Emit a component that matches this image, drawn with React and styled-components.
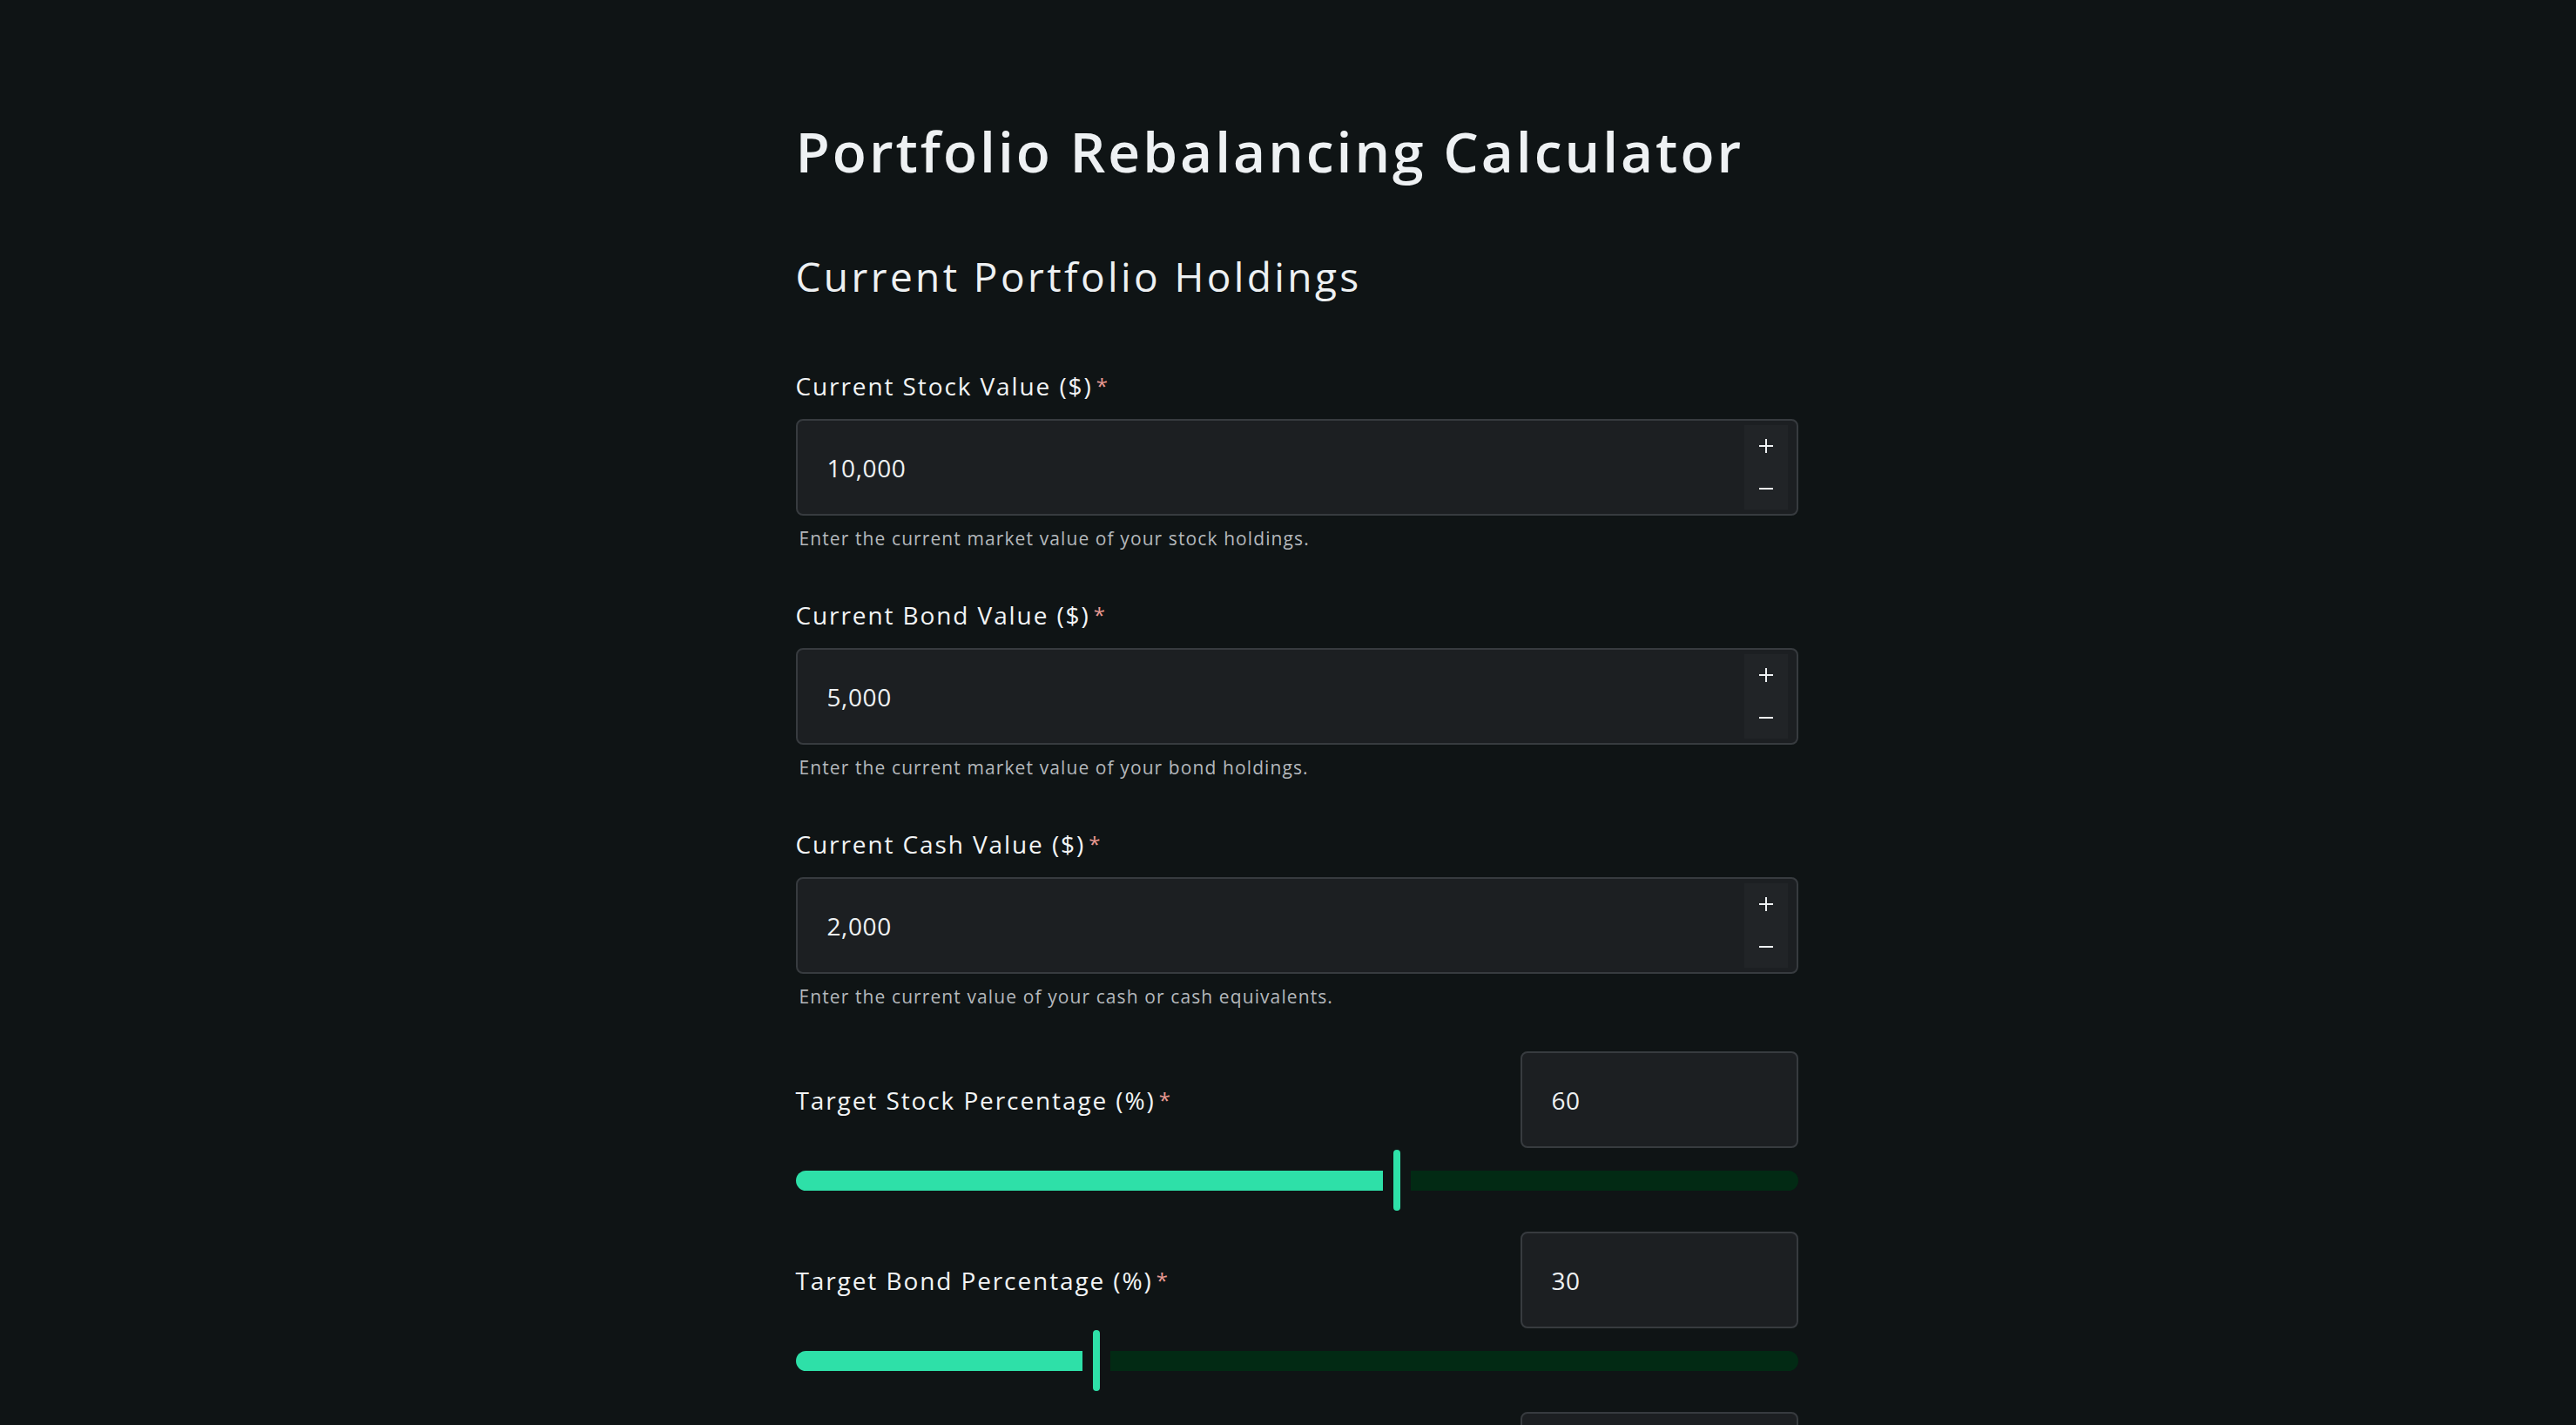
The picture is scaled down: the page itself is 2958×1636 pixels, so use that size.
import styled, { createGlobalStyle } from "styled-components";

const GlobalStyle = createGlobalStyle`
  html, body {
    margin: 0;
    padding: 0;
    background: #0f1415;
  }
  body {
    font-family: "Open Sans", "Liberation Sans", sans-serif;
    color: #eef1f3;
  }
`;

const Page = styled.div`
  display: flex;
  justify-content: center;
  padding: 0 0 0 20px;
  min-height: 100vh;
`;

const Main = styled.main`
  width: 1151px;
  display: flex;
  flex-direction: column;
  padding-top: 134px;
`;

const Title = styled.h1`
  margin: 0;
  font-size: 64px;
  line-height: 80px;
  font-weight: 600;
  letter-spacing: 3px;
  color: #eef1f3;
`;

const Subtitle = styled.h2`
  margin: 73px 0 0;
  font-size: 46px;
  line-height: 60px;
  font-weight: 400;
  letter-spacing: 3.4px;
  color: #eef1f3;
`;

const Field = styled.div`
  display: flex;
  flex-direction: column;
  margin-top: ${(p) => p.$top || 0}px;
`;

const Label = styled.label`
  font-size: 28px;
  line-height: 36px;
  font-weight: 500;
  letter-spacing: 1.9px;
  color: #f2f4f5;
  margin-bottom: 20px;
`;

const Required = styled.span`
  color: #e99a92;
  font-size: 24px;
  margin-left: 4px;
  letter-spacing: 0;
  vertical-align: 2px;
`;

const InputBox = styled.div`
  position: relative;
  display: flex;
  align-items: center;
  height: 111px;
  width: ${(p) => p.$width || "100%"};
  box-sizing: border-box;
  background: #1c1f22;
  border: 2px solid #373b3f;
  border-radius: 8px;
  padding: 0 34px;
`;

const Value = styled.span`
  font-size: 28px;
  letter-spacing: 0.6px;
  color: #eef1f3;
`;

const Stepper = styled.div`
  position: absolute;
  top: 5px;
  bottom: 5px;
  right: 10px;
  width: 50px;
  display: flex;
  flex-direction: column;
  background: #212427;
`;

const StepButton = styled.div`
  flex: 1;
  display: flex;
  align-items: center;
  justify-content: center;
`;

const Help = styled.p`
  margin: 11px 0 0 4px;
  font-size: 21px;
  line-height: 30px;
  letter-spacing: 1.1px;
  color: #b4b8bc;
`;

const TargetRow = styled.div`
  display: flex;
  align-items: center;
  justify-content: space-between;
  margin-top: ${(p) => p.$top || 0}px;
`;

const TargetLabel = styled(Label)`
  margin-bottom: 0;
`;

const Slider = styled.div`
  display: flex;
  align-items: center;
  height: 70px;
  margin: 2px 0 24px;
`;

const Filled = styled.div`
  height: 23px;
  background: #2ee0a8;
  border-radius: 12px 0 0 12px;
`;

const Thumb = styled.div`
  width: 8px;
  height: 70px;
  border-radius: 4px;
  background: #2ee0a8;
  margin: 0 12px;
`;

const Rest = styled.div`
  flex: 1;
  height: 23px;
  background: #022a14;
  border-radius: 0 12px 12px 0;
`;

const Plus = () => (
  <svg width="18" height="18" viewBox="0 0 18 18">
    <path d="M9 1v16M1 9h16" stroke="#eef1f3" strokeWidth="2" />
  </svg>
);

const Minus = () => (
  <svg width="18" height="18" viewBox="0 0 18 18">
    <path d="M1 9h16" stroke="#eef1f3" strokeWidth="2" />
  </svg>
);

const holdings = [
  { label: "Current Stock Value ($)", value: "10,000", help: "Enter the current market value of your stock holdings." },
  { label: "Current Bond Value ($)", value: "5,000", help: "Enter the current market value of your bond holdings." },
  { label: "Current Cash Value ($)", value: "2,000", help: "Enter the current value of your cash or cash equivalents." },
];

const targets = [
  { label: "Target Stock Percentage (%)", value: 60 },
  { label: "Target Bond Percentage (%)", value: 30 },
  { label: "Target Cash Percentage (%)", value: 10 },
];

export default function App() {
  return (
    <>
      <GlobalStyle />
      <Page>
        <Main>
          <Title>Portfolio Rebalancing Calculator</Title>
          <Subtitle>Current Portfolio Holdings</Subtitle>
          {holdings.map((h, i) => (
            <Field key={h.label} $top={i === 0 ? 78 : 55}>
              <Label>
                {h.label}
                <Required>*</Required>
              </Label>
              <InputBox>
                <Value>{h.value}</Value>
                <Stepper>
                  <StepButton>
                    <Plus />
                  </StepButton>
                  <StepButton>
                    <Minus />
                  </StepButton>
                </Stepper>
              </InputBox>
              <Help>{h.help}</Help>
            </Field>
          ))}
          {targets.map((t, i) => (
            <div key={t.label}>
              <TargetRow $top={i === 0 ? 48 : 0}>
                <TargetLabel>
                  {t.label}
                  <Required>*</Required>
                </TargetLabel>
                <InputBox $width="319px">
                  <Value>{t.value}</Value>
                </InputBox>
              </TargetRow>
              <Slider>
                <Filled style={{ width: `calc(${t.value}% - 16px)` }} />
                <Thumb />
                <Rest />
              </Slider>
            </div>
          ))}
        </Main>
      </Page>
    </>
  );
}
